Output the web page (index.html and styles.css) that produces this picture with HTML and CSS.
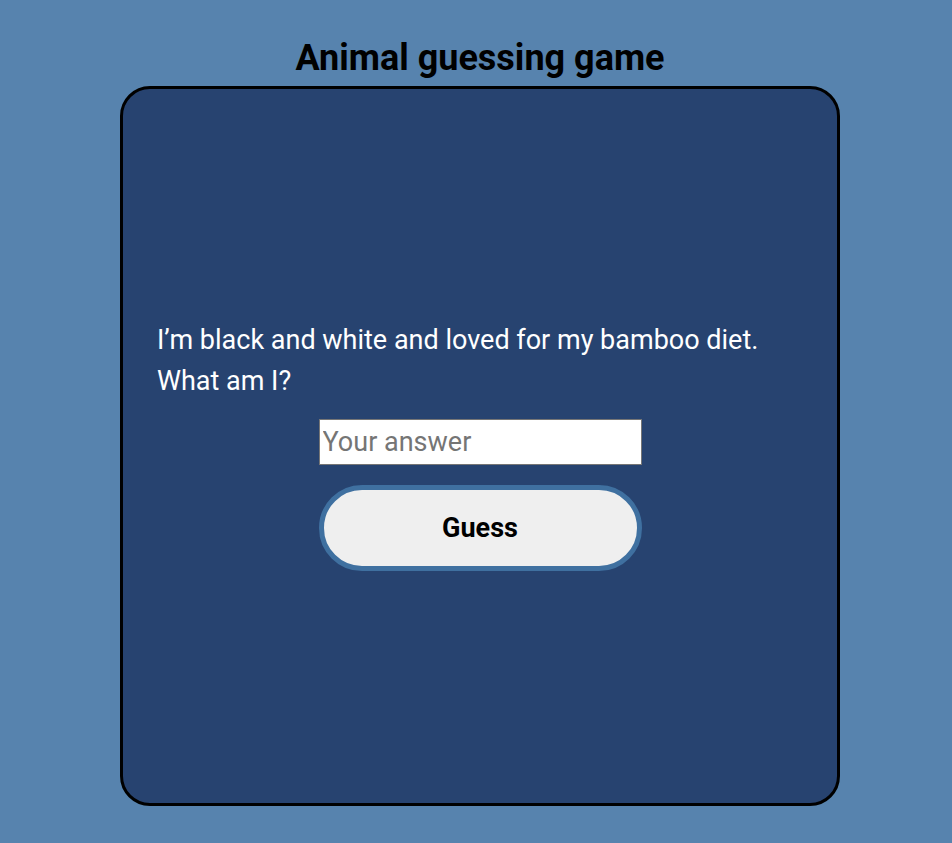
FILE: index.html
```html
<!DOCTYPE html>
<html lang="en">
<head>
<meta charset="utf-8">
<title>Animal guessing game</title>
<link rel="stylesheet" href="styles.css">
</head>
<body>
<main class="page">
  <h1 class="title">Animal guessing game</h1>
  <section class="card">
    <p class="question">I’m black and white and loved for my bamboo diet. What am I?</p>
    <input class="answer" type="text" placeholder="Your answer">
    <button class="guess" type="button">Guess</button>
  </section>
</main>
</body>
</html>
```

FILE: styles.css
```css
html, body {
  margin: 0;
  padding: 0;
}
body {
  background: #5783ae;
  font-family: Roboto, "Liberation Sans", sans-serif;
  min-height: 843px;
}
.page {
  display: flex;
  flex-direction: column;
  align-items: center;
  padding: 38px 0 0 8px;
}
.title {
  margin: 0 0 7px;
  font-size: 36px;
  font-weight: 700;
  line-height: 41px;
  color: #000;
}
.card {
  box-sizing: border-box;
  width: 720px;
  height: 720px;
  background: #274370;
  border: 3px solid #000;
  border-radius: 30px;
  padding: 0 34px 1px;
  display: flex;
  flex-direction: column;
  align-items: center;
  justify-content: center;
}
.question {
  align-self: stretch;
  margin: 0 0 17px;
  color: #fff;
  font-size: 27px;
  line-height: 41px;
}
.answer {
  box-sizing: border-box;
  width: 323px;
  height: 46px;
  margin: 0 0 20px;
  padding: 0 4px 0 3px;
  border: 1px solid #767676;
  background: #fff;
  font-family: Roboto, "Liberation Sans", sans-serif;
  font-size: 27px;
  color: #000;
  outline: none;
}
.answer::placeholder {
  color: #757575;
}
.guess {
  box-sizing: border-box;
  width: 323px;
  height: 86px;
  border: 5px solid #3f70a0;
  border-radius: 43px;
  background: #efefef;
  font-family: Roboto, "Liberation Sans", sans-serif;
  font-size: 27px;
  font-weight: 700;
  color: #000;
  cursor: pointer;
}
```
